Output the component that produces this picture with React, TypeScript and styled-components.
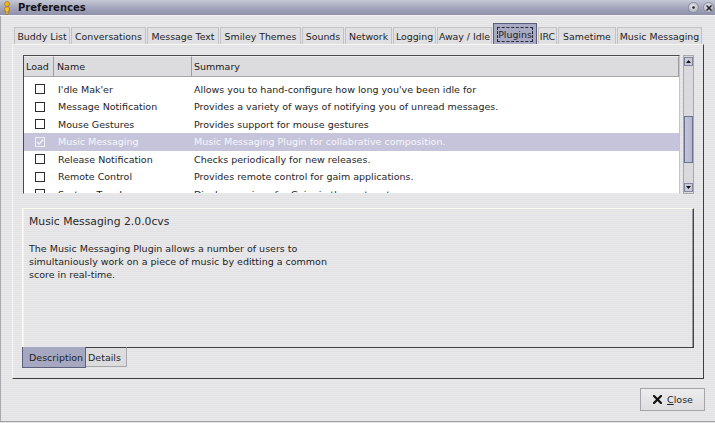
import React from 'react';
import styled, { createGlobalStyle } from 'styled-components';

const GlobalStyle = createGlobalStyle`
  html, body { margin: 0; padding: 0; background: #e6e6e8; }
  body { font-family: "DejaVu Sans", "Liberation Sans", sans-serif; color: #1c1c1c; }
  * { box-sizing: border-box; }
`;

const stripes = `repeating-linear-gradient(to bottom, #e9e9eb 0px, #e9e9eb 1px, #e2e2e4 1px, #e2e2e4 2px)`;

const Window = styled.div`
  width: 715px;
  height: 423px;
  overflow: hidden;
  display: flex;
  flex-direction: column;
  background: ${stripes};
`;

const TitleBar = styled.div`
  height: 16px;
  flex: none;
  display: flex;
  align-items: center;
  padding-left: 3px;
  background: linear-gradient(#c6c8d6, #a1a4ba 55%, #8e91a9);
  border-bottom: 1px solid #f2f2f4;
`;

const Title = styled.span`
  margin-left: 7px;
  font-size: 10px;
  font-weight: bold;
  color: #14141c;
`;

const WinButtons = styled.div`
  margin-left: auto;
  display: flex;
  gap: 4px;
  margin-right: 1px;
`;

const WinButton = styled.div`
  width: 11px;
  height: 11px;
  border-radius: 50%;
  background: radial-gradient(circle at 40% 35%, #e4e4ea, #a9aabb);
  border: 1px solid #8c8da0;
  display: flex;
  align-items: center;
  justify-content: center;
`;

const Body = styled.div`
  flex: 1;
  display: flex;
  flex-direction: column;
  padding: 7px 11px 0 11px;
  border-left: 1px solid #a9a9ad;
`;

const TabRow = styled.div`
  display: flex;
  align-items: flex-end;
  gap: 1px;
  height: 21px;
  margin-left: 2px;
`;

const Tab = styled.div<{ $w: number; $active?: boolean }>`
  width: ${p => p.$w}px;
  height: ${p => (p.$active ? 21 : 17)}px;
  flex: none;
  display: flex;
  align-items: center;
  justify-content: center;
  font-size: 9.4px;
  white-space: nowrap;
  color: #1e1e1e;
  background: ${p => (p.$active ? '#a8aac3' : '#e0e0e2')};
  border: 1px solid ${p => (p.$active ? '#5a5d79' : '#c2c2c6')};
  border-bottom: none;
`;

const FocusRing = styled.span`
  border: 1px dashed #2a2a3a;
  padding: 1px 0;
  line-height: 11px;
`;

const Page = styled.div`
  height: 335px;
  display: flex;
  flex-direction: column;
  padding: 10px 9px 10px 9px;
  border-top: 1px solid #f6f6f2;
  border-left: 1px solid #f6f6f2;
  border-right: 1px solid #3e3e3e;
  border-bottom: 1px solid #3e3e3e;
`;

const TreeArea = styled.div`
  display: flex;
  height: 139px;
  margin-left: 1px;
  flex: none;
`;

const TreeBox = styled.div`
  flex: 1;
  display: flex;
  flex-direction: column;
  background: #fff;
  border-style: solid;
  border-width: 1px;
  border-color: #4a4a4a #c4c4c8 #e8e8ea #4a4a4a;
  overflow: hidden;
`;

const cols = '30px 138px 1fr';

const Header = styled.div`
  display: grid;
  grid-template-columns: ${cols};
  height: 21px;
  flex: none;
  position: relative;
  z-index: 1;
`;

const HeaderCell = styled.div<{ $pad?: number }>`
  display: flex;
  align-items: center;
  padding-left: ${p => p.$pad ?? 2}px;
  font-size: 9.5px;
  background: #dcdcde;
  border-right: 1px solid #9c9ca2;
  border-bottom: 1px solid #a6a6aa;
  border-top: 1px solid #f0f0f0;
  color: #202020;
`;

const Viewport = styled.div`
  flex: 1;
  overflow: hidden;
`;

const Rows = styled.div`
  margin-top: -14px;
`;

const Row = styled.div<{ $sel?: boolean }>`
  display: grid;
  grid-template-columns: ${cols};
  height: 17.5px;
  align-items: center;
  font-size: 9.5px;
  white-space: nowrap;
  background: ${p => (p.$sel ? '#c6c4da' : '#fff')};
  color: ${p => (p.$sel ? '#f6f6fa' : '#1e1e1e')};
`;

const CheckCell = styled.div`
  display: flex;
  padding-left: 11px;
`;

const Check = styled.div<{ $sel?: boolean }>`
  width: 10px;
  height: 10px;
  border: 1px solid ${p => (p.$sel ? '#eeeef4' : '#2c2c2c')};
  background: ${p => (p.$sel ? '#c6c4da' : '#fff')};
  display: flex;
  align-items: center;
  justify-content: center;
`;

const NameCell = styled.div`
  padding-left: 4px;
  overflow: hidden;
`;

const SummaryCell = styled.div`
  padding-left: 2px;
  overflow: hidden;
`;

const Scrollbar = styled.div`
  width: 11px;
  margin-left: 3px;
  flex: none;
  position: relative;
  background: #d9d9de;
  border: 1px solid #a8a8b2;
  display: flex;
  flex-direction: column;
  justify-content: space-between;
  padding: 1px 0;
`;

const ArrowBtn = styled.div`
  height: 9px;
  background: #c9cada;
  border: 1px solid #84869e;
  display: flex;
  align-items: center;
  justify-content: center;
`;

const Thumb = styled.div`
  position: absolute;
  left: 0;
  right: 0;
  background: linear-gradient(to right, #c4c5da, #b4b6cf);
  border: 1px solid #6e7190;
`;

const DescPanel = styled.div`
  margin-top: 14px;
  height: 140px;
  flex: none;
  padding: 6px 6px;
  border-style: solid;
  border-width: 1px;
  border-color: #f8f8ee #444 #3e3e3e #f8f8ee;
  box-shadow: inset 1px 0 #f2f2f2, inset -1px 0 #9a9aa0;
`;

const DescTitle = styled.div`
  font-size: 10.8px;
  line-height: 14px;
  color: #2a2a2a;
`;

const DescText = styled.div`
  margin-top: 13px;
  font-size: 9.5px;
  line-height: 13px;
  color: #1e1e1e;
`;

const SubTabRow = styled.div`
  display: flex;
  margin-top: -1px;
  height: 21px;
  align-items: flex-start;
`;

const SubTab = styled.div<{ $w: number; $active?: boolean }>`
  width: ${p => p.$w}px;
  height: ${p => (p.$active ? 21 : 20)}px;
  display: flex;
  align-items: center;
  padding-left: ${p => (p.$active ? 6 : 2)}px;
  font-size: 9.5px;
  white-space: nowrap;
  color: #1e1e1e;
  background: ${p => (p.$active ? '#a6a8c2' : '#dcdcde')};
  border-style: solid;
  border-width: ${p => (p.$active ? '0 1px 1px 1px' : '1px 1px 1px 0')};
  border-color: ${p => (p.$active ? '#5e617e' : '#3e3e3e #a8a8ac #a8a8ac #a8a8ac')};
`;

const ButtonRow = styled.div`
  display: flex;
  justify-content: flex-end;
  margin-top: 9px;
  margin-right: -1px;
`;

const Button = styled.button`
  width: 65px;
  height: 23px;
  display: flex;
  align-items: center;
  justify-content: center;
  gap: 5px;
  font-family: inherit;
  font-size: 9.5px;
  color: #1e1e1e;
  background: linear-gradient(#ececee, #dedee0);
  border: 1px solid #a4a4aa;
  padding: 0 0 0 1px;
`;

const Mnemonic = styled.span`
  text-decoration: underline;
`;

const BottomStrip = styled.div`
  height: 2px;
  flex: none;
  border-top: 1px solid #9e9ea4;
  background: #e4e4e6;
`;

const tabs = [
  { label: 'Buddy List', w: 56 },
  { label: 'Conversations', w: 75 },
  { label: 'Message Text', w: 72 },
  { label: 'Smiley Themes', w: 81 },
  { label: 'Sounds', w: 42 },
  { label: 'Network', w: 47 },
  { label: 'Logging', w: 43 },
  { label: 'Away / Idle', w: 55 },
  { label: 'Plugins', w: 44, active: true },
  { label: 'IRC', w: 19 },
  { label: 'Sametime', w: 58 },
  { label: 'Music Messaging', w: 85 },
];

const plugins = [
  { name: 'Join/Part Hiding', summary: 'Lets you hide join/part messages in large rooms, quietly by you.' },
  { name: "I'dle Mak'er", summary: "Allows you to hand-configure how long you've been idle for" },
  { name: 'Message Notification', summary: 'Provides a variety of ways of notifying you of unread messages.' },
  { name: 'Mouse Gestures', summary: 'Provides support for mouse gestures' },
  { name: 'Music Messaging', summary: 'Music Messaging Plugin for collabrative composition.', checked: true, sel: true },
  { name: 'Release Notification', summary: 'Checks periodically for new releases.' },
  { name: 'Remote Control', summary: 'Provides remote control for gaim applications.' },
  { name: 'System Tray Icon', summary: 'Displays an icon for Gaim in the system tray.' },
];

const GaimIcon = () => (
  <svg width="8" height="14" viewBox="0 0 8 14">
    <circle cx="4" cy="3" r="2.4" fill="#f2b51e" stroke="#9a6a08" strokeWidth="0.6" />
    <path d="M2 6 H6 L6.5 10 L5 10 L5 13.5 L3 13.5 L3 10 L1.5 10 Z" fill="#f6c232" stroke="#9a6a08" strokeWidth="0.6" />
  </svg>
);

const Arrow = ({ up }: { up?: boolean }) => (
  <svg width="5" height="3" viewBox="0 0 5 3">
    <path d={up ? 'M0 3 L2.5 0 L5 3 Z' : 'M0 0 L2.5 3 L5 0 Z'} fill="#111" />
  </svg>
);

const CheckMark = () => (
  <svg width="8" height="8" viewBox="0 0 8 8">
    <path d="M1 4 L3.2 6.2 L7 1.5" fill="none" stroke="#f4f4f8" strokeWidth="1.2" />
  </svg>
);

const CloseIcon = () => (
  <svg width="9" height="9" viewBox="0 0 9 9">
    <path d="M1 1 L8 8 M8 1 L1 8" stroke="#111" strokeWidth="2.2" strokeLinecap="square" />
  </svg>
);

export default function App() {
  return (
    <>
      <GlobalStyle />
      <Window>
        <TitleBar>
          <GaimIcon />
          <Title>Preferences</Title>
          <WinButtons>
            <WinButton>
              <svg width="3" height="3" viewBox="0 0 3 3"><circle cx="1.5" cy="1.5" r="1.3" fill="#222" /></svg>
            </WinButton>
            <WinButton>
              <svg width="6" height="6" viewBox="0 0 6 6"><path d="M0.5 0.5 L5.5 5.5 M5.5 0.5 L0.5 5.5" stroke="#222" strokeWidth="1.5" /></svg>
            </WinButton>
          </WinButtons>
        </TitleBar>
        <Body>
          <TabRow>
            {tabs.map(t => (
              <Tab key={t.label} $w={t.w} $active={t.active}>
                {t.active ? <FocusRing>{t.label}</FocusRing> : t.label}
              </Tab>
            ))}
          </TabRow>
          <Page>
            <TreeArea>
              <TreeBox>
                <Header>
                  <HeaderCell>Load</HeaderCell>
                  <HeaderCell $pad={3}>Name</HeaderCell>
                  <HeaderCell>Summary</HeaderCell>
                </Header>
                <Viewport>
                  <Rows>
                    {plugins.map(p => (
                      <Row key={p.name} $sel={p.sel}>
                        <CheckCell>
                          <Check $sel={p.sel}>{p.checked && <CheckMark />}</Check>
                        </CheckCell>
                        <NameCell>{p.name}</NameCell>
                        <SummaryCell>{p.summary}</SummaryCell>
                      </Row>
                    ))}
                  </Rows>
                </Viewport>
              </TreeBox>
              <Scrollbar>
                <ArrowBtn><Arrow up /></ArrowBtn>
                <Thumb style={{ top: 60, height: 47 }} />
                <ArrowBtn><Arrow /></ArrowBtn>
              </Scrollbar>
            </TreeArea>
            <DescPanel>
              <DescTitle>Music Messaging 2.0.0cvs</DescTitle>
              <DescText>
                The Music Messaging Plugin allows a number of users to<br />
                simultaniously work on a piece of music by editting a common<br />
                score in real-time.
              </DescText>
            </DescPanel>
            <SubTabRow>
              <SubTab $w={64} $active>Description</SubTab>
              <SubTab $w={41}>Details</SubTab>
            </SubTabRow>
          </Page>
          <ButtonRow>
            <Button>
              <CloseIcon />
              <span><Mnemonic>C</Mnemonic>lose</span>
            </Button>
          </ButtonRow>
        </Body>
        <BottomStrip />
      </Window>
    </>
  );
}
